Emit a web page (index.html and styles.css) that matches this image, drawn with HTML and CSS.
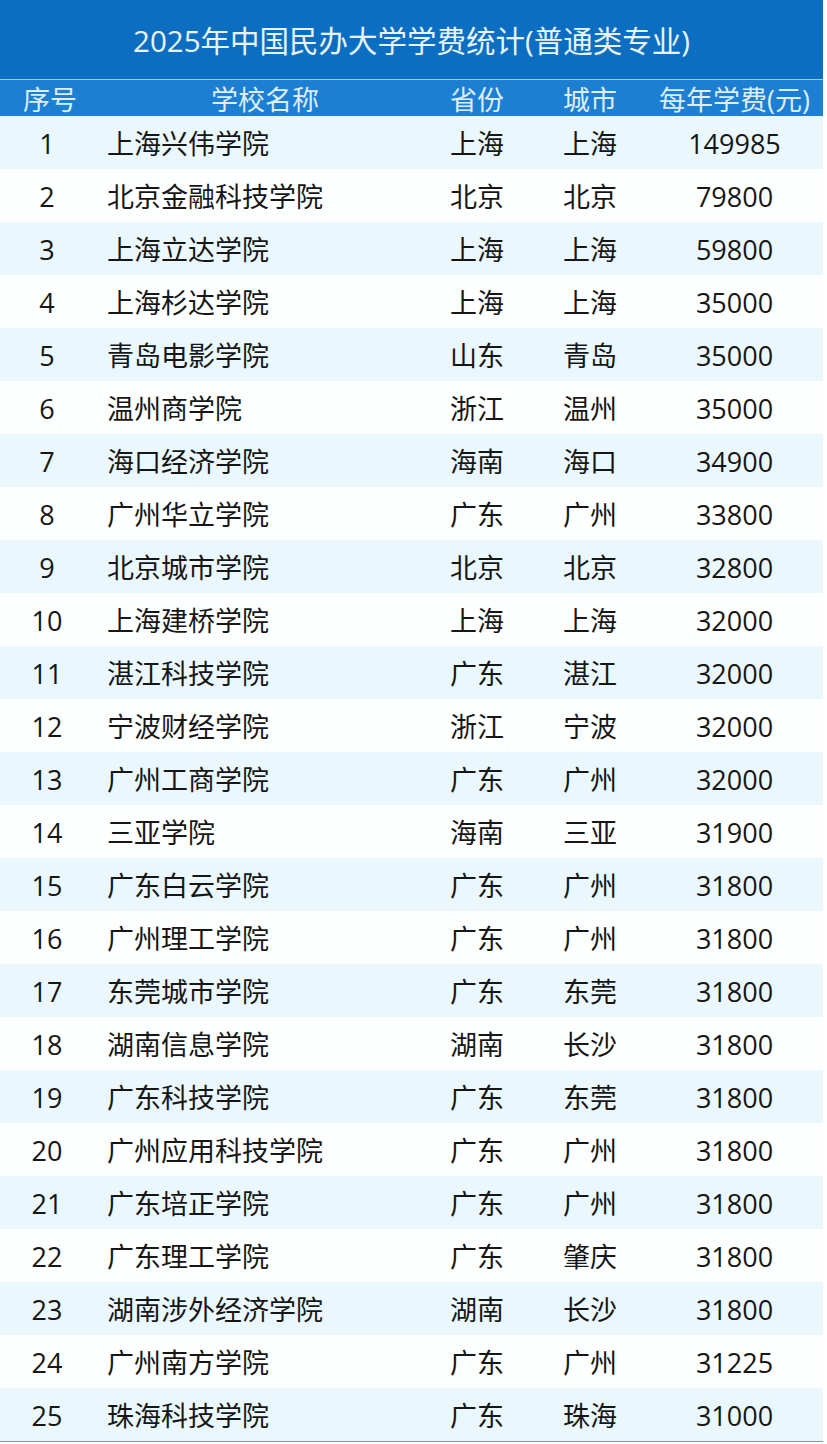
FILE: index.html
```html
<!DOCTYPE html>
<html lang="zh-CN">
<head>
<meta charset="utf-8">
<title>2025年中国民办大学学费统计(普通类专业)</title>
<link rel="stylesheet" href="styles.css">
</head>
<body>
<div class="sheet">
  <div class="title">2025年中国民办大学学费统计(普通类专业)</div>
  <div class="row head">
    <div class="c no">序号</div>
    <div class="c name hname">学校名称</div>
    <div class="c prov">省份</div>
    <div class="c city">城市</div>
    <div class="c fee">每年学费(元)</div>
  </div>
  <div class="row odd"><div class="c no">1</div><div class="c name">上海兴伟学院</div><div class="c prov">上海</div><div class="c city">上海</div><div class="c fee">149985</div></div>
  <div class="row"><div class="c no">2</div><div class="c name">北京金融科技学院</div><div class="c prov">北京</div><div class="c city">北京</div><div class="c fee">79800</div></div>
  <div class="row odd"><div class="c no">3</div><div class="c name">上海立达学院</div><div class="c prov">上海</div><div class="c city">上海</div><div class="c fee">59800</div></div>
  <div class="row"><div class="c no">4</div><div class="c name">上海杉达学院</div><div class="c prov">上海</div><div class="c city">上海</div><div class="c fee">35000</div></div>
  <div class="row odd"><div class="c no">5</div><div class="c name">青岛电影学院</div><div class="c prov">山东</div><div class="c city">青岛</div><div class="c fee">35000</div></div>
  <div class="row"><div class="c no">6</div><div class="c name">温州商学院</div><div class="c prov">浙江</div><div class="c city">温州</div><div class="c fee">35000</div></div>
  <div class="row odd"><div class="c no">7</div><div class="c name">海口经济学院</div><div class="c prov">海南</div><div class="c city">海口</div><div class="c fee">34900</div></div>
  <div class="row"><div class="c no">8</div><div class="c name">广州华立学院</div><div class="c prov">广东</div><div class="c city">广州</div><div class="c fee">33800</div></div>
  <div class="row odd"><div class="c no">9</div><div class="c name">北京城市学院</div><div class="c prov">北京</div><div class="c city">北京</div><div class="c fee">32800</div></div>
  <div class="row"><div class="c no">10</div><div class="c name">上海建桥学院</div><div class="c prov">上海</div><div class="c city">上海</div><div class="c fee">32000</div></div>
  <div class="row odd"><div class="c no">11</div><div class="c name">湛江科技学院</div><div class="c prov">广东</div><div class="c city">湛江</div><div class="c fee">32000</div></div>
  <div class="row"><div class="c no">12</div><div class="c name">宁波财经学院</div><div class="c prov">浙江</div><div class="c city">宁波</div><div class="c fee">32000</div></div>
  <div class="row odd"><div class="c no">13</div><div class="c name">广州工商学院</div><div class="c prov">广东</div><div class="c city">广州</div><div class="c fee">32000</div></div>
  <div class="row"><div class="c no">14</div><div class="c name">三亚学院</div><div class="c prov">海南</div><div class="c city">三亚</div><div class="c fee">31900</div></div>
  <div class="row odd"><div class="c no">15</div><div class="c name">广东白云学院</div><div class="c prov">广东</div><div class="c city">广州</div><div class="c fee">31800</div></div>
  <div class="row"><div class="c no">16</div><div class="c name">广州理工学院</div><div class="c prov">广东</div><div class="c city">广州</div><div class="c fee">31800</div></div>
  <div class="row odd"><div class="c no">17</div><div class="c name">东莞城市学院</div><div class="c prov">广东</div><div class="c city">东莞</div><div class="c fee">31800</div></div>
  <div class="row"><div class="c no">18</div><div class="c name">湖南信息学院</div><div class="c prov">湖南</div><div class="c city">长沙</div><div class="c fee">31800</div></div>
  <div class="row odd"><div class="c no">19</div><div class="c name">广东科技学院</div><div class="c prov">广东</div><div class="c city">东莞</div><div class="c fee">31800</div></div>
  <div class="row"><div class="c no">20</div><div class="c name">广州应用科技学院</div><div class="c prov">广东</div><div class="c city">广州</div><div class="c fee">31800</div></div>
  <div class="row odd"><div class="c no">21</div><div class="c name">广东培正学院</div><div class="c prov">广东</div><div class="c city">广州</div><div class="c fee">31800</div></div>
  <div class="row"><div class="c no">22</div><div class="c name">广东理工学院</div><div class="c prov">广东</div><div class="c city">肇庆</div><div class="c fee">31800</div></div>
  <div class="row odd"><div class="c no">23</div><div class="c name">湖南涉外经济学院</div><div class="c prov">湖南</div><div class="c city">长沙</div><div class="c fee">31800</div></div>
  <div class="row"><div class="c no">24</div><div class="c name">广州南方学院</div><div class="c prov">广东</div><div class="c city">广州</div><div class="c fee">31225</div></div>
  <div class="row odd last"><div class="c no">25</div><div class="c name">珠海科技学院</div><div class="c prov">广东</div><div class="c city">珠海</div><div class="c fee">31000</div></div>
</div>
</body>
</html>
```
FILE: styles.css
```css
html, body {
  margin: 0;
  padding: 0;
  background: #ffffff;
}
body {
  font-family: "Open Sans", "Noto Sans CJK SC", sans-serif;
  color: #161616;
}
.sheet {
  width: 823px;
  display: flex;
  flex-direction: column;
}
.title {
  background: #0b6ec0;
  color: #e8f4fd;
  font-size: 29.5px;
  display: flex;
  align-items: center;
  justify-content: center;
  border-bottom: 1px solid #9fcbee;
  box-sizing: border-box;
  height: 80px;
  padding-bottom: 1px;
}
.row {
  display: grid;
  grid-template-columns: 94px 326px 114px 112px 177px;
  height: 53px;
  align-items: center;
  font-size: 27px;
  background: #fdfefe;
  padding-top: 2px;
  box-sizing: border-box;
}
.row.odd {
  background: #eaf7fc;
}
.row.head {
  height: 36px;
  background: #1d7fd2;
  color: #dcedfb;
  padding-top: 3px;
}
.row.last {
  border-bottom: 1px solid #8996a0;
  height: 54px;
}
.c {
  white-space: nowrap;
  line-height: 1;
}
.no, .prov, .city, .fee {
  text-align: center;
}
.name {
  padding-left: 13px;
}
.hname {
  text-align: center;
  padding-left: 0;
  position: relative;
  left: 8px;
}
.head .no {
  position: relative;
  left: 3px;
}
```
